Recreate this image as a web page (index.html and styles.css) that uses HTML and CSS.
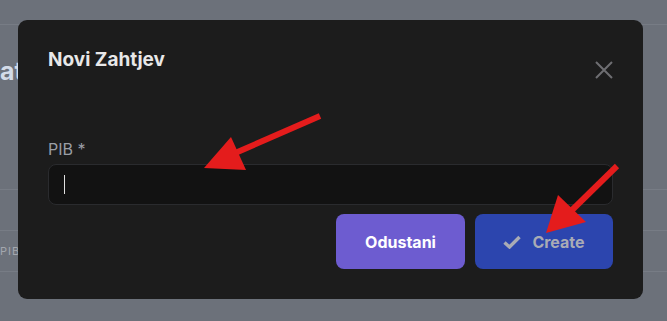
FILE: index.html
```html
<!DOCTYPE html>
<html lang="hr">
<head>
    <meta charset="UTF-8">
    <meta name="viewport" content="width=device-width, initial-scale=1.0">
    <title>Novi Zahtjev</title>
    <link rel="stylesheet" href="styles.css">
</head>
<body>

    <!-- Page behind the dialog -->
    <div class="page">
        <div class="page-top"></div>
        <h1 class="page-title">at</h1>
        <div class="page-gap"></div>
        <div class="page-row"></div>
        <div class="page-row page-head">PIB</div>
        <div class="page-row"></div>
    </div>

    <!-- Dialog -->
    <div class="modal">
        <div class="modal-header">
            <h2 class="modal-title">Novi Zahtjev</h2>
            <button class="close-btn" aria-label="Zatvori">
                <svg width="18" height="18" viewBox="0 0 18 18">
                    <path d="M1 1 L17 17 M17 1 L1 17" stroke="#6e6e72" stroke-width="2" fill="none"/>
                </svg>
            </button>
        </div>

        <label class="field-label" for="pib">PIB *</label>
        <div class="field-input">
            <span class="caret"></span>
        </div>

        <div class="modal-actions">
            <button class="btn btn-cancel">Odustani</button>
            <button class="btn btn-create">
                <svg width="18" height="14" viewBox="0 0 18 14">
                    <path d="M1.5 7.5 L6.5 12 L16.5 2" stroke="#a9abb5" stroke-width="3.4" fill="none"/>
                </svg>
                Create
            </button>
        </div>
    </div>

    <!-- Annotation arrows -->
    <svg class="arrows" width="667" height="321" viewBox="0 0 667 321">
        <line x1="320" y1="116" x2="226" y2="157" stroke="#e41c1c" stroke-width="6"/>
        <polygon points="204,168 231,137 246,170" fill="#e41c1c"/>
        <line x1="617" y1="166" x2="567" y2="215" stroke="#e41c1c" stroke-width="6"/>
        <polygon points="546,233 558,195 586,222" fill="#e41c1c"/>
    </svg>

</body>
</html>
```

FILE: styles.css
```css
/* General body styling */
body {
    font-family: Inter, "Noto Sans", sans-serif;
    margin: 0;
    padding: 0;
    width: 667px;
    height: 321px;
    overflow: hidden;
    background-color: #6c717a;
    position: relative;
}

/* Page behind the overlay */
.page {
    padding-top: 24px;
}

.page-top {
    border-top: 1px solid #777c85;
}

.page-title {
    margin: 0;
    padding-top: 30px;
    font-size: 25px;
    line-height: 32px;
    font-weight: 700;
    color: #d3dbe8;
}

.page-gap {
    height: 102px;
}

.page-row {
    height: 40px;
    border-top: 1px solid #777c85;
}

.page-head {
    font-size: 11px;
    line-height: 40px;
    letter-spacing: 1px;
    color: #a3a7ae;
}

/* Dialog */
.modal {
    position: absolute;
    left: 18px;
    top: 20px;
    width: 625px;
    height: 279px;
    box-sizing: border-box;
    padding: 28px 30px 30px;
    background-color: #1c1c1c;
    border-radius: 9px;
    display: flex;
    flex-direction: column;
}

.modal-header {
    display: flex;
    justify-content: space-between;
    align-items: flex-start;
}

.modal-title {
    margin: 0;
    font-size: 19px;
    line-height: 24px;
    font-weight: 700;
    color: #e8e8e8;
}

.close-btn {
    margin-top: 13px;
    padding: 0;
    border: none;
    background: none;
    width: 18px;
    height: 18px;
    display: flex;
}

.field-label {
    margin-top: 60px;
    font-size: 16px;
    line-height: 20px;
    color: #9a9ea6;
}

.field-input {
    margin-top: 5px;
    height: 41px;
    box-sizing: border-box;
    background-color: #121212;
    border: 1px solid #2a2b2e;
    border-radius: 8px;
    padding: 10px 15px;
}

.caret {
    display: block;
    width: 1px;
    height: 19px;
    background-color: #e0e0e0;
}

.modal-actions {
    margin-top: 9px;
    display: flex;
    justify-content: flex-end;
    gap: 10px;
}

/* Button styling */
.btn {
    height: 55px;
    border: none;
    border-radius: 8px;
    font-family: inherit;
    font-size: 16px;
    font-weight: 700;
    display: flex;
    align-items: center;
    justify-content: center;
    gap: 11px;
}

.btn-cancel {
    width: 129px;
    background-color: #6d5cd0;
    color: #ffffff;
}

.btn-create {
    width: 138px;
    background-color: #2c45ae;
    color: #a9abb5;
}

/* Annotation overlay */
.arrows {
    position: absolute;
    left: 0;
    top: 0;
}
```
